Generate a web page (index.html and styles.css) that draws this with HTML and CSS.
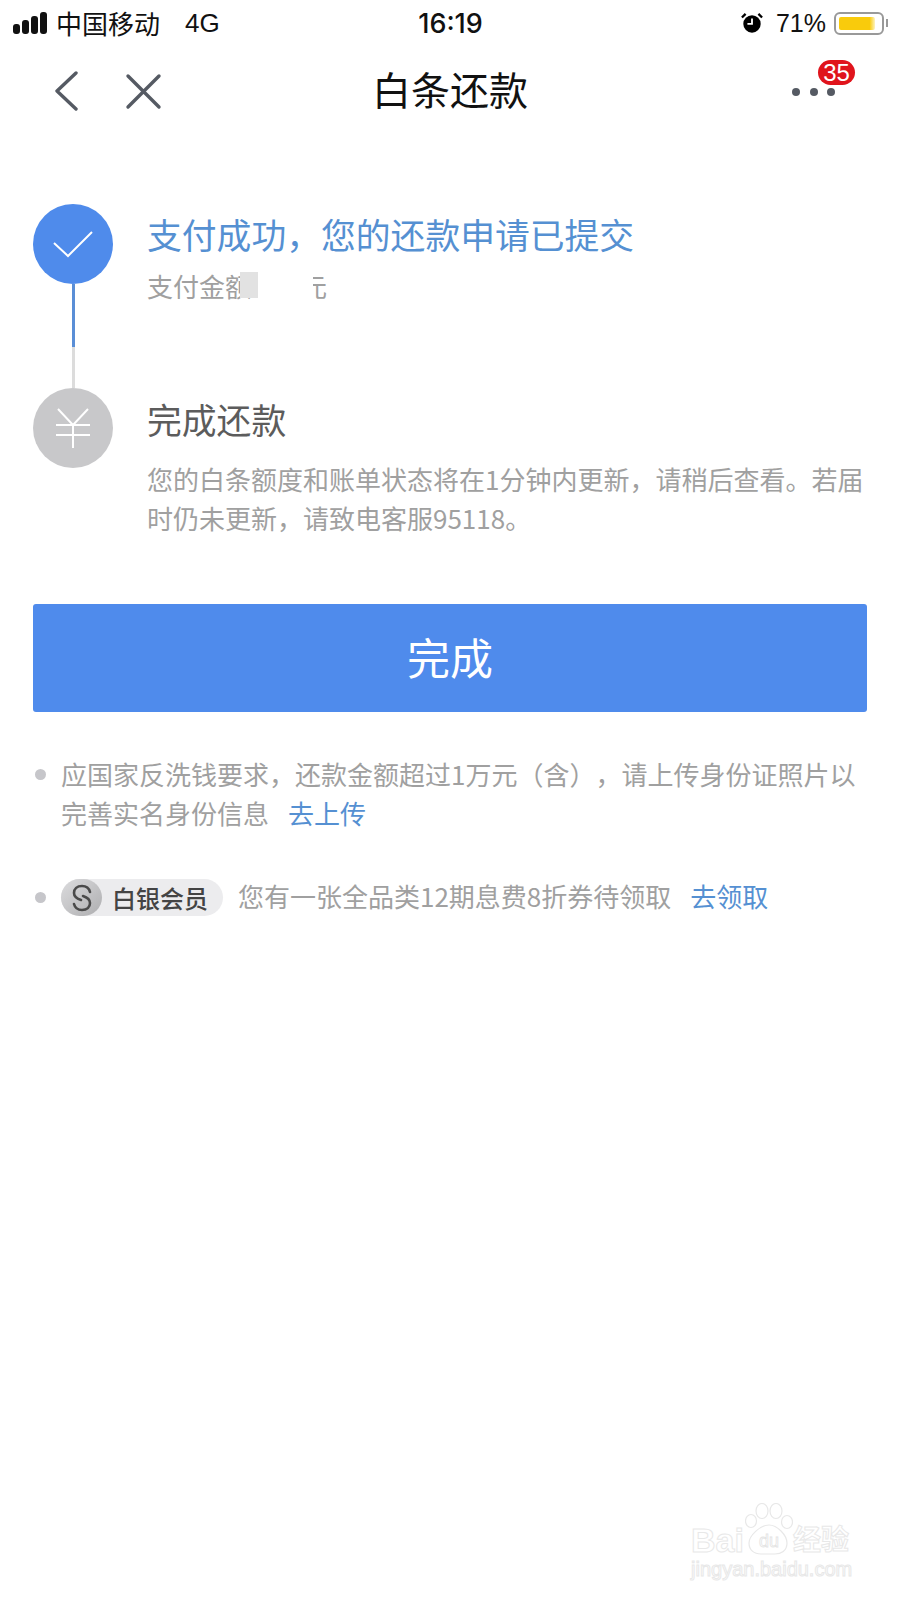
FILE: index.html
```html
<!DOCTYPE html>
<html>
  <head>
    <meta charset="utf-8" />
    <title>白条还款</title>
    <link rel="stylesheet" href="styles.css">
  </head>
  <body>
    <div class="status">
      <div class="status-left">
        <div class="signal"><i></i><i></i><i></i><i></i></div>
        <span class="carrier">中国移动</span>
        <span class="net">4G</span>
      </div>
      <div class="clock">16:19</div>
      <div class="status-right">
        <svg class="alarm" width="22" height="22" viewBox="0 0 24 24">
          <circle cx="12" cy="13" r="9.5" fill="#000" />
          <path d="M12 7v6H7" fill="none" stroke="#fff" stroke-width="2" />
          <path d="M1 6l4-4M23 6l-4-4" stroke="#000" stroke-width="2.5" />
        </svg>
        <span class="percent">71%</span>
        <div class="battery"><div class="battery-fill"></div></div>
        <div class="battery-tip"></div>
      </div>
    </div>

    <div class="nav">
      <div class="nav-icons">
        <svg width="26" height="40" viewBox="0 0 26 40">
          <path d="M23 2L4 20l19 18" fill="none" stroke="#555a63" stroke-width="3.4" stroke-linecap="round" stroke-linejoin="round" />
        </svg>
        <svg width="37" height="37" viewBox="0 0 37 37">
          <path d="M3 3l31 31M34 3L3 34" fill="none" stroke="#555a63" stroke-width="3.4" stroke-linecap="round" />
        </svg>
      </div>
      <div class="nav-title">白条还款</div>
      <div class="more">
        <i></i><i></i><i></i>
        <span class="badge">35</span>
      </div>
    </div>

    <div class="steps">
      <div class="step step-done">
        <div class="rail">
          <div class="circle circle-blue">
            <svg width="40" height="27" viewBox="0 0 40 27">
              <path d="M1 12l14 13L39 1" fill="none" stroke="#fff" stroke-width="2" />
            </svg>
          </div>
          <div class="line-blue"></div>
          <div class="line-gray"></div>
        </div>
        <div class="step-body">
          <div class="step-title blue">支付成功，您的还款申请已提交</div>
          <div class="amount">支付金额<span class="amount-gap"></span>元
            <span class="mask-gray"></span>
            <span class="mask-white"></span>
          </div>
        </div>
      </div>
      <div class="step">
        <div class="rail">
          <div class="circle circle-gray">
            <svg width="34" height="40" viewBox="0 0 34 40">
              <path d="M2 1l15 16L32 1M0 17h34M0 27h34M17 17v23" fill="none" stroke="#fff" stroke-width="2" />
            </svg>
          </div>
        </div>
        <div class="step-body">
          <div class="step-title dark">完成还款</div>
          <div class="step-desc">您的白条额度和账单状态将在1分钟内更新，请稍后查看。若届时仍未更新，请致电客服95118。</div>
        </div>
      </div>
    </div>

    <div class="done-btn">完成</div>

    <div class="notes">
      <div class="note">
        <div class="dot"></div>
        <div class="note-text">应国家反洗钱要求，还款金额超过1万元（含），请上传身份证照片以完善实名身份信息<a class="link">去上传</a></div>
      </div>
      <div class="note note-vip">
        <div class="dot"></div>
        <div class="vip">
          <div class="vip-icon">
            <svg width="20" height="28" viewBox="0 0 20 28">
              <path d="M18 8C17 4 14 2 10 2 5 2 2 5 2 9c0 4 4 6 7 7" fill="none" stroke="#4a4a4a" stroke-width="2.6" stroke-linecap="round" />
              <path d="M2 20c1 4 4 6 8 6 5 0 8-3 8-7 0-4-4-6-7-7" fill="none" stroke="#4a4a4a" stroke-width="2.6" stroke-linecap="round" />
            </svg>
          </div>
          <span class="vip-name">白银会员</span>
        </div>
        <div class="note-text">您有一张全品类12期息费8折券待领取<a class="link">去领取</a></div>
      </div>
    </div>

    <div class="watermark">
      <div class="wm-top">
        <span class="wm-bai">Bai</span>
        <svg class="wm-paw" width="48" height="52" viewBox="0 0 48 52">
          <g fill="#fff" stroke="#e8e8e8" stroke-width="1.2">
            <ellipse cx="6" cy="18" rx="5.5" ry="6.5" />
            <ellipse cx="17" cy="8" rx="6" ry="7.5" />
            <ellipse cx="31" cy="8" rx="6" ry="7.5" />
            <ellipse cx="42" cy="19" rx="5.5" ry="6.5" />
            <path d="M24 22c8 0 18 10 18 18s-6 11-12 11H16c-7 0-12-4-12-11s11-18 20-18z" />
          </g>
          <text x="24" y="44" text-anchor="middle" class="wm-du">du</text>
        </svg>
        <span class="wm-cn">经验</span>
      </div>
      <div class="wm-url">jingyan.baidu.com</div>
    </div>
  </body>
</html>
```

FILE: styles.css
```css
* {
  padding: 0;
  margin: 0;
  box-sizing: border-box;
}
body {
  position: relative;
  width: 900px;
  height: 1600px;
  background-color: #fff;
  overflow: hidden;
  font-family: "Noto Sans CJK SC", "Liberation Sans", sans-serif;
  text-spacing-trim: space-all;
}

/* status bar */
.status {
  display: flex;
  align-items: center;
  justify-content: space-between;
  height: 46px;
  padding: 0 12px 0 13px;
  color: #111;
}
.status-left {
  display: flex;
  align-items: center;
  width: 300px;
}
.signal {
  display: flex;
  align-items: flex-end;
  gap: 2px;
  height: 22px;
  margin-right: 9px;
}
.signal i {
  display: block;
  width: 7px;
  background-color: #111;
  border-radius: 3px;
}
.signal i:nth-child(1) { height: 10px; }
.signal i:nth-child(2) { height: 14px; }
.signal i:nth-child(3) { height: 18px; }
.signal i:nth-child(4) { height: 22px; }
.carrier {
  font-size: 26px;
  line-height: 36px;
}
.net {
  margin-left: 25px;
  font-family: "Liberation Sans", sans-serif;
  font-size: 26px;
}
.clock {
  font-family: "Inter", "Liberation Sans", sans-serif;
  font-size: 27px;
  font-weight: 500;
}
.status-right {
  display: flex;
  align-items: center;
  justify-content: flex-end;
  width: 300px;
}
.alarm {
  margin-right: 13px;
}
.percent {
  font-family: "Liberation Sans", sans-serif;
  font-size: 25px;
  margin-right: 8px;
}
.battery {
  width: 50px;
  height: 23px;
  padding: 3px;
  border: 2px solid #999;
  border-radius: 6px;
}
.battery-fill {
  width: 36px;
  height: 100%;
  background: linear-gradient(to right, #f9cb0c 85%, #fdf3c0);
  border-radius: 2px;
}
.battery-tip {
  width: 2px;
  height: 8px;
  margin-left: 2px;
  background-color: #999;
}

/* nav */
.nav {
  position: relative;
  display: flex;
  align-items: center;
  justify-content: center;
  height: 90px;
  padding-bottom: 6px;
}
.nav-icons {
  position: absolute;
  left: 53px;
  top: 25px;
  display: flex;
  align-items: center;
  gap: 46px;
}
.nav-title {
  font-size: 39px;
  color: #111;
}
.more {
  position: absolute;
  left: 792px;
  top: 42px;
  display: flex;
  gap: 9.5px;
}
.more i {
  display: block;
  width: 8px;
  height: 8px;
  background-color: #555a63;
  border-radius: 50%;
}
.badge {
  position: absolute;
  left: 26px;
  top: -28px;
  width: 37px;
  height: 25px;
  background-color: #e0141c;
  border-radius: 13px;
  color: #fff;
  font-family: "Liberation Sans", sans-serif;
  font-size: 24px;
  line-height: 25px;
  text-align: center;
}

/* steps */
.steps {
  padding: 68px 33px 0 33px;
}
.step {
  display: flex;
  gap: 34px;
}
.step-done {
  height: 184px;
}
.rail {
  display: flex;
  flex-direction: column;
  align-items: center;
  width: 80px;
  flex-shrink: 0;
}
.circle {
  display: flex;
  align-items: center;
  justify-content: center;
  width: 80px;
  height: 80px;
  border-radius: 50%;
}
.circle-blue {
  background-color: #4f8beb;
}
.circle-gray {
  background-color: #c8c8ca;
}
.line-blue {
  width: 3px;
  height: 63px;
  background-color: #5a8ed6;
}
.line-gray {
  width: 3px;
  height: 41px;
  background-color: #dcdcdc;
}
.step-title {
  font-size: 34.8px;
  line-height: 46px;
}
.blue {
  color: #5590d2;
  padding-top: 7px;
}
.dark {
  color: #5c5c5c;
  padding-top: 8px;
}
.amount {
  position: relative;
  margin-top: 12px;
  font-size: 26px;
  line-height: 34px;
  color: #a0a0a0;
}
.amount-gap {
  display: inline-block;
  width: 50px;
}
.mask-gray {
  position: absolute;
  left: 93px;
  top: 3px;
  width: 18px;
  height: 26px;
  background-color: #e2e2e2;
}
.mask-white {
  position: absolute;
  left: 111px;
  top: 0;
  width: 55px;
  height: 34px;
  background-color: #fff;
}
.step-desc {
  margin-top: 17px;
  font-size: 26px;
  line-height: 39px;
  color: #a0a0a0;
}

/* button */
.done-btn {
  margin: 67px 33px 0 33px;
  height: 108px;
  background-color: #4f8bec;
  border-radius: 3px;
  color: #fff;
  font-size: 43px;
  line-height: 105px;
  text-align: center;
}

/* notes */
.notes {
  padding: 42px 33px 0 33px;
}
.note {
  display: flex;
}
.note-vip {
  align-items: center;
  margin-top: 44px;
}
.dot {
  flex-shrink: 0;
  width: 11px;
  height: 11px;
  margin: 15px 15px 0 2px;
  background-color: #c6c6ca;
  border-radius: 50%;
}
.note-vip .dot {
  margin-top: 0;
}
.note-text {
  font-size: 26px;
  line-height: 39px;
  color: #a0a0a0;
}
.note-vip .note-text {
  padding-bottom: 4px;
}
.link {
  margin-left: 19px;
  color: #5590d2;
}
.vip {
  display: flex;
  align-items: center;
  width: 162px;
  height: 37px;
  margin-right: 15px;
  background-color: #ececee;
  border-radius: 19px;
}
.vip-icon {
  display: flex;
  align-items: center;
  justify-content: center;
  width: 41px;
  height: 37px;
  background: linear-gradient(to bottom right, #dcdcde, #aeaeb0);
  border-radius: 19px;
}
.vip-name {
  margin-left: 10px;
  font-size: 24px;
  font-weight: 500;
  color: #444;
}

/* watermark */
.watermark {
  position: absolute;
  left: 691px;
  top: 1503px;
  width: 170px;
}
.wm-top {
  display: flex;
  align-items: flex-end;
  height: 52px;
  color: #fff;
  -webkit-text-stroke: 1px #e8e8e8;
}
.wm-bai {
  width: 54px;
  font-family: "Liberation Sans", sans-serif;
  font-size: 34px;
  font-weight: 700;
  line-height: 30px;
}
.wm-paw {
  flex-shrink: 0;
}
.wm-du {
  font-family: "Liberation Sans", sans-serif;
  font-size: 18px;
  fill: #fff;
  stroke: #e4e4e4;
  stroke-width: 0.8;
  -webkit-text-stroke: 0;
}
.wm-cn {
  font-size: 28px;
  font-weight: 700;
  line-height: 34px;
}
.wm-url {
  margin-top: 3px;
  font-family: "Liberation Sans", sans-serif;
  font-size: 20px;
  color: #fff;
  -webkit-text-stroke: 1px #e8e8e8;
}
```
